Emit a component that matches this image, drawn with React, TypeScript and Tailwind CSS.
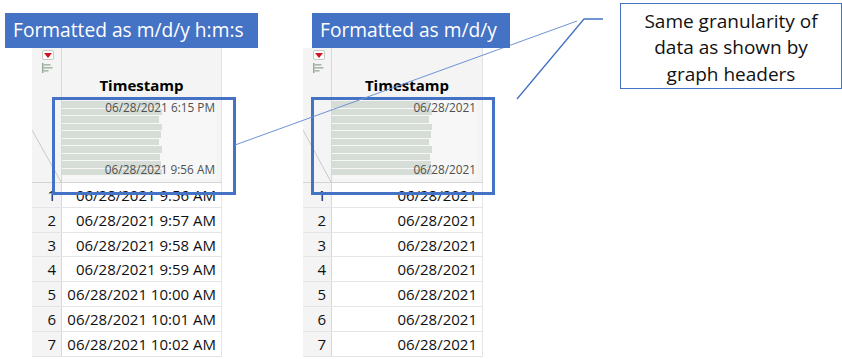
import React from 'react';

const font = { fontFamily: '"Open Sans", "Noto Sans", sans-serif' };

const leftRows = [
  '06/28/2021 9:56 AM',
  '06/28/2021 9:57 AM',
  '06/28/2021 9:58 AM',
  '06/28/2021 9:59 AM',
  '06/28/2021 10:00 AM',
  '06/28/2021 10:01 AM',
  '06/28/2021 10:02 AM',
];

const barWidths = [98, 100, 97, 100, 99, 97, 100, 98, 99, 100];

function MenuIcons() {
  return (
    <div className="flex flex-col gap-[3px] pt-[2px] pl-[10px] items-start">
      <div className="w-[12px] h-[10px] rounded-[2px] border border-[#c8c8c8] bg-white flex items-center justify-center">
        <svg width="8" height="5" viewBox="0 0 8 5">
          <polygon points="0,0 8,0 4,5" fill="#d2141e" />
        </svg>
      </div>
      <svg width="11" height="10" viewBox="0 0 11 10">
        <rect x="0" y="0" width="1.5" height="10" fill="#9aa89a" />
        <rect x="1.5" y="1" width="7" height="1.6" fill="#a9b8a9" />
        <rect x="1.5" y="4" width="9" height="1.6" fill="#a9b8a9" />
        <rect x="1.5" y="7" width="5" height="1.6" fill="#a9b8a9" />
      </svg>
    </div>
  );
}

function Histogram({ top, bottom, width }: { top: string; bottom: string; width: number }) {
  return (
    <div className="relative h-[80px] bg-[#f7f7f7]" style={{ width }}>
      <div className="flex flex-col gap-[1px] pt-[2px]">
        {barWidths.map((w, i) => (
          <div key={i} className="h-[6.5px] bg-[#d6dcd6]" style={{ width: w }} />
        ))}
      </div>
      <div className="absolute top-[1px] right-[1px] text-[11.8px] text-[#505050] leading-[14px]">{top}</div>
      <div className="absolute bottom-[3px] right-[1px] text-[11.8px] text-[#505050] leading-[14px]">{bottom}</div>
    </div>
  );
}

function DataTable({
  rows,
  numW,
  dataW,
  top,
  bottom,
}: {
  rows: string[];
  numW: number;
  dataW: number;
  top: string;
  bottom: string;
}) {
  return (
    <div className="relative" style={{ width: numW + dataW }}>
      <div className="flex h-[135px] border-b border-[#d4d4d4]">
        <div className="relative h-full bg-[#f4f4f4] border-r border-[#d8d8d8]" style={{ width: numW }}>
          <MenuIcons />
          <svg className="absolute left-0 bottom-0" width={numW} height="52" viewBox={`0 0 ${numW} 52`}>
            <line x1="0" y1="0" x2={numW - 1} y2="52" stroke="#c9c9c9" strokeWidth="1" />
          </svg>
        </div>
        <div className="flex flex-col h-full bg-[#f4f4f4] border-r border-[#e2e2e2]" style={{ width: dataW }}>
          <div className="h-[51px] flex items-end justify-center pb-[4px] text-[15px] font-bold text-black leading-[20px]">
            Timestamp
          </div>
          <Histogram top={top} bottom={bottom} width={dataW - 6} />
        </div>
      </div>
      {rows.map((r, i) => (
        <div key={i} className="flex h-[24.8px] border-b border-[#e4e4ea] text-[15px] leading-[24px] text-[#111]">
          <div className="bg-[#f4f4f4] border-r border-[#d8d8d8] text-right pr-[5px]" style={{ width: numW }}>
            {i + 1}
          </div>
          <div className="bg-white border-r border-[#e4e4ea] text-right pr-[5px]" style={{ width: dataW }}>
            {r}
          </div>
        </div>
      ))}
    </div>
  );
}

function Label({ text, width }: { text: string; width: number }) {
  return (
    <div
      className="relative z-10 h-[35px] bg-[#4472c4] text-white text-[19.2px] leading-[34px] pl-[8px] whitespace-nowrap"
      style={{ width }}
    >
      {text}
    </div>
  );
}

export default function App() {
  return (
    <div className="relative w-[842px] h-[359px] overflow-hidden bg-white" style={font}>
      <div className="flex">
        <div className="w-[303px] pt-[13px]">
          <div className="pl-[5px]">
            <Label text="Formatted as m/d/y h:m:s" width={253} />
          </div>
          <div className="relative pl-[32px]">
            <DataTable rows={leftRows} numW={30} dataW={160} top="06/28/2021 6:15 PM" bottom="06/28/2021 9:56 AM" />
            <div className="absolute left-[52px] top-[49px] w-[184px] h-[98px] border-[3px] border-[#4472c4]" />
          </div>
        </div>
        <div className="w-[317px] pt-[13px]">
          <div className="pl-[9px]">
            <Label text="Formatted as m/d/y" width={198} />
          </div>
          <div className="relative">
            <DataTable
              rows={leftRows.map(() => '06/28/2021')}
              numW={29}
              dataW={151}
              top="06/28/2021"
              bottom="06/28/2021"
            />
            <div className="absolute left-[8px] top-[49px] w-[184px] h-[98px] border-[3px] border-[#4472c4]" />
          </div>
        </div>
        <div className="mt-[3px] w-[222px] h-[86px] border-[1.5px] border-[#4472c4] flex flex-col items-center justify-center text-[19px] leading-[26.5px] text-[#111] pt-[3px]">
          <span>Same granularity of</span>
          <span>data as shown by</span>
          <span>graph headers</span>
        </div>
      </div>
      <svg className="absolute inset-0 pointer-events-none" width="842" height="359" viewBox="0 0 842 359">
        <line x1="235" y1="145" x2="577" y2="21" stroke="#6f93d4" strokeWidth="1" />
        <polyline points="603,19 584,19 517,99" fill="none" stroke="#4472c4" strokeWidth="1.3" />
      </svg>
    </div>
  );
}
